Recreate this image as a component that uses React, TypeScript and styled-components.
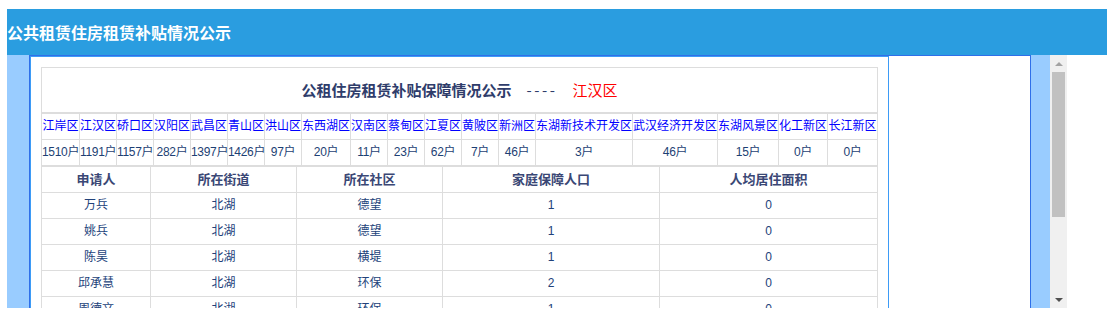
import styled, { createGlobalStyle } from 'styled-components';

const GlobalStyle = createGlobalStyle`
  body {
    margin: 0;
    background: #fff;
    font-family: "Liberation Sans", "Noto Sans CJK SC", sans-serif;
  }
`;

const Page = styled.div`
  padding: 9px 0 0 7px;
`;

const TitleBar = styled.h1`
  width: 1100px;
  height: 46px;
  margin: 0;
  background: #2a9de0;
  color: #fff;
  font: bold 16px/46px "Noto Sans CJK SC", sans-serif;
`;

const Frame = styled.div`
  display: flex;
  width: 1060px;
  height: 253px;
`;

const Viewport = styled.div`
  flex: 1;
  overflow: hidden;
  background: #99ccff;
`;

const ScrollBar = styled.div`
  display: flex;
  flex-direction: column;
  width: 17px;
  background: #f0f0f0;
`;

const ArrowButton = styled.div`
  display: flex;
  align-items: center;
  justify-content: center;
  height: 17px;
`;

const Track = styled.div`
  flex: 1;
  padding: 0 2px;
`;

const Thumb = styled.div`
  height: 145px;
  background: #c1c1c1;
`;

const Sheet = styled.div`
  width: 1002px;
  box-sizing: border-box;
  margin-left: 22px;
  background: #fff;
  border: 1px solid #2f6fe9;
`;

const Column = styled.div`
  width: 859px;
  box-sizing: border-box;
  padding: 10px;
  border: 1px solid #3d9bf6;
  border-bottom: none;
`;

const ReportTitle = styled.div`
  height: 44px;
  border: 1px solid #ddd;
  text-align: center;
  font: bold 15px/44px "Noto Sans CJK SC", sans-serif;
  color: #2f3d6b;
`;

const Dashes = styled.span`
  display: inline-block;
  margin: 0 15px;
  font-weight: normal;
  letter-spacing: 2.5px;
`;

const Area = styled.span`
  color: #ff0000;
  font-weight: normal;
`;

const Grid = styled.div<{ $cols: string }>`
  display: grid;
  grid-template-columns: ${(p) => p.$cols};
  grid-auto-rows: 25px;
  gap: 1px;
  background: #ddd;
  border: 1px solid #ddd;
`;

const Cell = styled.div`
  background: #fff;
  text-align: center;
  white-space: nowrap;
  font-size: 12px;
  line-height: 25px;
  color: #22427a;
`;

const DistrictLink = styled(Cell).attrs({ as: 'a' })`
  color: #0000ff;
  text-decoration: none;
`;

const CountCell = styled(Cell)`
  color: #1d3f74;
  letter-spacing: -0.3px;
`;

const HeadCell = styled(Cell)`
  font-size: 13px;
  font-weight: bold;
  color: #3a4775;
`;

const Arrow = ({ up, color }: { up?: boolean; color: string }) => (
  <svg width="8" height="4" viewBox="0 0 8 4">
    <path d={up ? 'M0 4 L4 0 L8 4 Z' : 'M0 0 L8 0 L4 4 Z'} fill={color} />
  </svg>
);

const districts: [string, string, number][] = [
  ['江岸区', '1510户', 37],
  ['江汉区', '1191户', 36],
  ['硚口区', '1157户', 36],
  ['汉阳区', '282户', 36],
  ['武昌区', '1397户', 36],
  ['青山区', '1426户', 36],
  ['洪山区', '97户', 36],
  ['东西湖区', '20户', 48],
  ['汉南区', '11户', 36],
  ['蔡甸区', '23户', 36],
  ['江夏区', '62户', 36],
  ['黄陂区', '7户', 36],
  ['新洲区', '46户', 36],
  ['东湖新技术开发区', '3户', 96],
  ['武汉经济开发区', '46户', 84],
  ['东湖风景区', '15户', 60],
  ['化工新区', '0户', 48],
  ['长江新区', '0户', 48],
];

const heads = ['申请人', '所在街道', '所在社区', '家庭保障人口', '人均居住面积'];

const rows = [
  ['万兵', '北湖', '德望', '1', '0'],
  ['姚兵', '北湖', '德望', '1', '0'],
  ['陈昊', '北湖', '横堤', '1', '0'],
  ['邱承慧', '北湖', '环保', '2', '0'],
  ['周德文', '北湖', '环保', '1', '0'],
  ['李红', '北湖', '环保', '1', '0'],
  ['张敏', '北湖', '北湖', '2', '0'],
  ['刘芳', '北湖', '北湖', '1', '0'],
  ['王强', '北湖', '德望', '1', '0'],
];

const districtCols = districts
  .map((d, i) => (i === districts.length - 1 ? '1fr' : `${d[2]}px`))
  .join(' ');

const App = () => {
  return (
    <Page>
      <GlobalStyle />
      <TitleBar>公共租赁住房租赁补贴情况公示</TitleBar>
      <Frame>
        <Viewport>
          <Sheet>
            <Column>
              <ReportTitle>
                公租住房租赁补贴保障情况公示
                <Dashes>----</Dashes>
                <Area>江汉区</Area>
              </ReportTitle>
              <Grid $cols={districtCols}>
                {districts.map((d) => (
                  <DistrictLink key={d[0]} href="#">
                    {d[0]}
                  </DistrictLink>
                ))}
                {districts.map((d) => (
                  <CountCell key={d[0]}>{d[1]}</CountCell>
                ))}
              </Grid>
              <Grid $cols="108px 145px 145px 216px 1fr">
                {heads.map((h) => (
                  <HeadCell key={h}>{h}</HeadCell>
                ))}
                {rows.map((r, i) =>
                  r.map((v, j) => <Cell key={`${i}-${j}`}>{v}</Cell>)
                )}
              </Grid>
            </Column>
          </Sheet>
        </Viewport>
        <ScrollBar>
          <ArrowButton>
            <Arrow up color="#a3a3a3" />
          </ArrowButton>
          <Track>
            <Thumb />
          </Track>
          <ArrowButton>
            <Arrow color="#505050" />
          </ArrowButton>
        </ScrollBar>
      </Frame>
    </Page>
  );
};

export default App;
